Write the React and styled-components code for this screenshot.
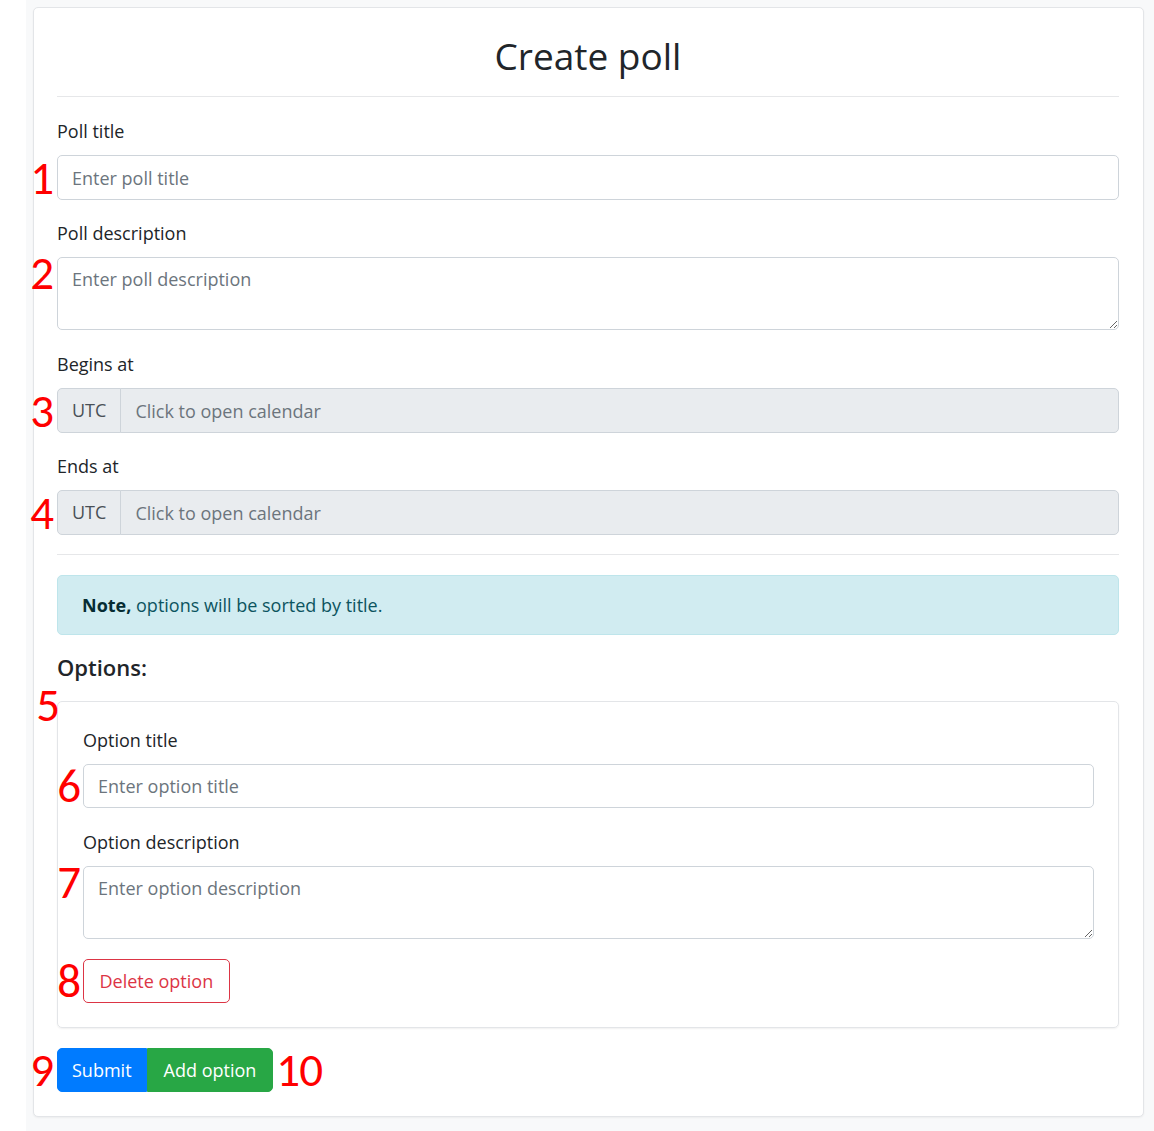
import React from 'react';
import styled, { createGlobalStyle, css } from 'styled-components';

const GlobalStyle = createGlobalStyle`
  html, body {
    margin: 0;
    padding: 0;
    background: #ffffff;
  }
  body {
    font-family: "Segoe UI", "Open Sans", sans-serif;
    font-size: 18px;
    line-height: 28.5px;
    color: #212529;
  }
  * {
    box-sizing: border-box;
  }
`;

const Page = styled.div`
  margin-left: 26px;
  min-height: 1131px;
  background: #f8f9fa;
  padding: 7px 10px 15px 7px;
`;

const Card = styled.div`
  background: #ffffff;
  border: 1px solid #e3e5e8;
  border-radius: 5px;
  padding: 24px 24px 24px 23px;
  box-shadow: 0 1px 2px rgba(0, 0, 0, 0.05);
`;

const Title = styled.h1`
  margin: 0;
  height: 48px;
  line-height: 48px;
  text-align: center;
  font-size: 37px;
  font-weight: 500;
  color: #212529;
`;

const Divider = styled.hr`
  margin: ${(p) => p.$top}px 0 ${(p) => p.$bottom}px;
  border: 0;
  border-top: 1px solid #e6e7e9;
`;

const FormGroup = styled.div`
  margin-bottom: ${(p) => (p.$mb !== undefined ? p.$mb : 19)}px;
`;

const Label = styled.label`
  display: block;
  margin-bottom: 9.5px;
  line-height: 28.5px;
  color: #212529;
`;

const Field = styled.div`
  position: relative;
  display: ${(p) => (p.$inline ? 'inline-block' : 'block')};
`;

const Marker = styled.span`
  position: absolute;
  font-family: "Carlito", "Lato", sans-serif;
  font-size: 47px;
  line-height: 47px;
  letter-spacing: -1px;
  color: #ff0000;
  pointer-events: none;
  ${(p) =>
    p.$side === 'right'
      ? css`left: calc(100% + 3px);`
      : css`right: calc(100% + ${p.$gap !== undefined ? p.$gap : 4}px);`}
  ${(p) =>
    p.$align === 'top'
      ? css`top: ${p.$top !== undefined ? p.$top : -7}px;`
      : css`top: 50%; transform: translateY(-50%);`}
`;

const controlBase = css`
  display: block;
  width: 100%;
  font-family: inherit;
  font-size: 18px;
  color: #495057;
  background: #ffffff;
  border: 1px solid #ced4da;
  border-radius: 5px;
  outline: none;
  &::placeholder {
    color: #6c757d;
    opacity: 1;
  }
`;

const TextInput = styled.input`
  ${controlBase}
  height: ${(p) => p.$h || 45}px;
  padding: 0 14px;
  line-height: 28.5px;
`;

const TextArea = styled.textarea`
  ${controlBase}
  height: 73px;
  padding: 7px 14px;
  line-height: 28.5px;
  resize: vertical;
`;

const InputGroup = styled.div`
  display: flex;
  height: 45px;
`;

const GroupText = styled.span`
  display: flex;
  align-items: center;
  padding: 0 14px;
  background: #e9ecef;
  color: #495057;
  border: 1px solid #ced4da;
  border-radius: 5px 0 0 5px;
`;

const GroupInput = styled.input`
  ${controlBase}
  flex: 1;
  height: 45px;
  padding: 0 14px;
  margin-left: -1px;
  border-radius: 0 5px 5px 0;
  background: #e9ecef;
`;

const Alert = styled.div`
  padding: 14.5px 24px;
  line-height: 28.5px;
  background: #d1ecf1;
  border: 1px solid #bee5eb;
  border-radius: 5px;
  color: #0c5460;
  margin-bottom: 18px;

  strong {
    font-weight: 700;
    color: #062c33;
  }
`;

const OptionsHeading = styled.h5`
  margin: 0 0 20px;
  font-size: 22px;
  font-weight: 600;
  line-height: 28.5px;
  color: #212529;
`;

const OptionCard = styled.div`
  position: relative;
  border: 1px solid #e3e5e8;
  border-radius: 5px;
  padding: 24px 24px 24px 25px;
  margin-bottom: 20px;
  box-shadow: 0 1px 2px rgba(0, 0, 0, 0.06);
`;

const OutlineButton = styled.button`
  display: inline-block;
  height: 44px;
  padding: 0 15.5px;
  font-family: inherit;
  font-size: 18px;
  color: #dc3545;
  background: #ffffff;
  border: 1px solid #dc3545;
  border-radius: 5px;
  cursor: pointer;
`;

const ButtonRow = styled.div`
  position: relative;
  display: inline-flex;
`;

const Button = styled.button`
  height: 44px;
  padding: 0 ${(p) => (p.$variant === 'success' ? 16 : 14)}px;
  font-family: inherit;
  font-size: 18px;
  color: #ffffff;
  border: 1px solid ${(p) => (p.$variant === 'success' ? '#28a745' : '#007bff')};
  background: ${(p) => (p.$variant === 'success' ? '#28a745' : '#007bff')};
  border-radius: 0;
  cursor: pointer;
  &:first-of-type {
    border-radius: 5px 0 0 5px;
  }
  &:last-of-type {
    border-radius: 0 5px 5px 0;
  }
`;

const DateField = ({ marker }) => (
  <Field>
    <Marker>{marker}</Marker>
    <InputGroup>
      <GroupText>UTC</GroupText>
      <GroupInput disabled placeholder="Click to open calendar" />
    </InputGroup>
  </Field>
);

const App = () => {
  return (
    <>
      <GlobalStyle />
      <Page>
        <Card>
          <Title>Create poll</Title>
          <Divider $top={16} $bottom={20} />

          <FormGroup>
            <Label>Poll title</Label>
            <Field>
              <Marker>1</Marker>
              <TextInput placeholder="Enter poll title" />
            </Field>
          </FormGroup>

          <FormGroup $mb={20}>
            <Label>Poll description</Label>
            <Field>
              <Marker $align="top">2</Marker>
              <TextArea placeholder="Enter poll description" />
            </Field>
          </FormGroup>

          <FormGroup>
            <Label>Begins at</Label>
            <DateField marker="3" />
          </FormGroup>

          <FormGroup $mb={0}>
            <Label>Ends at</Label>
            <DateField marker="4" />
          </FormGroup>

          <Divider $top={19} $bottom={20} />

          <Alert>
            <strong>Note,</strong> options will be sorted by title.
          </Alert>

          <OptionsHeading>Options:</OptionsHeading>

          <OptionCard>
            <Marker $align="top" $top={-20} $gap={-1}>5</Marker>
            <FormGroup $mb={20}>
              <Label>Option title</Label>
              <Field>
                <Marker $gap={3}>6</Marker>
                <TextInput $h={44} placeholder="Enter option title" />
              </Field>
            </FormGroup>

            <FormGroup $mb={20}>
              <Label>Option description</Label>
              <Field>
                <Marker $align="top" $gap={3}>7</Marker>
                <TextArea placeholder="Enter option description" />
              </Field>
            </FormGroup>

            <Field $inline>
              <Marker $gap={3}>8</Marker>
              <OutlineButton>Delete option</OutlineButton>
            </Field>
          </OptionCard>

          <ButtonRow>
            <Marker>9</Marker>
            <Button $variant="primary">Submit</Button>
            <Button $variant="success">Add option</Button>
            <Marker $side="right">10</Marker>
          </ButtonRow>
        </Card>
      </Page>
    </>
  );
};

export default App;
